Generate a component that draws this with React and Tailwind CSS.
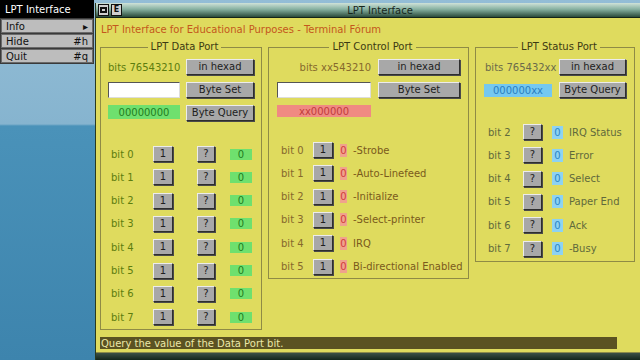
// Ventana "LPT Interface" sobre el escritorio, con el menú de ventana abierto a la izquierda.
const dataBits = [0, 1, 2, 3, 4, 5, 6, 7];
const ctrlBits = [
  ['0', '-Strobe'],
  ['1', '-Auto-Linefeed'],
  ['2', '-Initialize'],
  ['3', '-Select-printer'],
  ['4', 'IRQ'],
  ['5', 'Bi-directional Enabled'],
];
const statBits = [
  ['2', 'IRQ Status'],
  ['3', 'Error'],
  ['4', 'Select'],
  ['5', 'Paper End'],
  ['6', 'Ack'],
  ['7', '-Busy'],
];

function Btn({ children, className = '' }) {
  return (
    <button
      className={`flex shrink-0 items-center justify-center border border-t-[#ececec] border-l-[#ececec] border-b-[#2e2e2e] border-r-[#2e2e2e] bg-[#a8a8a8] leading-none text-[#1e1e1e] shadow-[1px_1px_0_#4a4a4a] ${className}`}
    >
      {children}
    </button>
  );
}

function Grupo({ titulo, className = '', children }) {
  return (
    <fieldset className={`shrink-0 border border-[#8f8b45] ${className}`}>
      <legend className="mx-auto px-[3px] leading-[12px] text-[#3c3a12]">{titulo}</legend>
      {children}
    </fieldset>
  );
}

function Menu() {
  const items = [
    ['Info', '▸'],
    ['Hide', '#h'],
    ['Quit', '#q'],
  ];
  return (
    <div className="w-[94px] bg-[#3a3a3a] pb-[1px]">
      <div className="flex h-[18px] items-center bg-black px-[5px] text-white">LPT Interface</div>
      {items.map(([t, k]) => (
        <div
          key={t}
          className="mx-[1px] mt-[1px] flex h-[14px] items-center justify-between border border-[#6a6a6a] bg-[#bdbdbd] px-[4px] text-[#111]"
        >
          <span>{t}</span>
          <span>{k}</span>
        </div>
      ))}
    </div>
  );
}

export default function App() {
  return (
    <div className="flex h-[360px] w-[640px] overflow-hidden bg-[linear-gradient(180deg,#93bdd6_0px,#86b4cf_124px,#4a92b9_126px,#3d84ad_360px)] font-['DejaVu_Sans',sans-serif] text-[10px]">
      {/* escritorio + menú */}
      <div className="w-[95px] shrink-0">
        <Menu />
      </div>

      {/* ventana */}
      <div className="mt-[3px] flex h-[357px] flex-1 flex-col border-l border-[#2a3a20] bg-[#dfdb5e]">
        <div className="flex h-[15px] shrink-0 items-center border-b border-[#142418] bg-[linear-gradient(180deg,#cfe2d8,#86b0a0_45%,#2a4a3a)] px-[2px]">
          <div className="flex gap-[2px]">
            <div className="flex h-[12px] w-[11px] items-center justify-center border border-[#111] bg-[#cfcfcf]">
              <div className="h-[6px] w-[7px] border-2 border-[#111] bg-[#cfcfcf]" />
            </div>
            <div className="flex h-[12px] w-[11px] items-center justify-center border border-[#111] bg-[#cfcfcf] text-[8px] font-bold leading-none text-[#111]">
              E
            </div>
          </div>
          <div className="flex-1 text-center text-[#17261c]">LPT Interface</div>
        </div>

        <div className="flex flex-1 flex-col pl-[4px]">
          <div className="mt-[4px] flex h-[14px] items-center pl-[1px] text-[#c4581c]">
            LPT Interface for Educational Purposes - Terminal Fórum
          </div>

          <div className="mt-[5px] flex items-start gap-[6px]">
            {/* Data Port */}
            <Grupo titulo="LPT Data Port" className="w-[162px] pb-[4px] pl-[7px] pt-[6px]">
              <div className="flex h-[16px] items-center gap-[6px]">
                <span className="w-[72px] whitespace-nowrap text-[#5d7d0e]">bits 76543210</span>
                <Btn className="h-[16px] w-[68px]">in hexad</Btn>
              </div>
              <div className="mt-[7px] flex h-[16px] items-center gap-[6px]">
                <div className="h-[16px] w-[72px] border border-t-[#555] border-l-[#555] border-b-[#ddd] border-r-[#ddd] bg-white" />
                <Btn className="h-[16px] w-[68px]">Byte Set</Btn>
              </div>
              <div className="mt-[7px] flex h-[16px] items-start gap-[6px]">
                <div className="flex h-[14px] w-[72px] items-center justify-center bg-[#6fe06e] text-[#1f7d1f]">00000000</div>
                <Btn className="h-[16px] w-[68px]">Byte Query</Btn>
              </div>
              <div className="mt-[25px] flex flex-col gap-[7.33px]">
                {dataBits.map((b) => (
                  <div key={b} className="flex h-[16px] items-center">
                    <span className="w-[45px] pl-[3px] text-[#5d7d0e]">bit {b}</span>
                    <Btn className="h-[16px] w-[20px]">1</Btn>
                    <Btn className="ml-[24px] h-[16px] w-[18px]">?</Btn>
                    <div className="ml-[15px] flex h-[11px] w-[22px] items-center justify-center bg-[#6fe06e] text-[#1f7d1f]">0</div>
                  </div>
                ))}
              </div>
            </Grupo>

            {/* Control Port */}
            <Grupo titulo="LPT Control Port" className="w-[201px] pb-[3px] pl-[8px] pt-[6px]">
              <div className="flex h-[16px] items-center gap-[7px]">
                <span className="w-[94px] whitespace-nowrap text-right text-[#86692c]">bits xx543210</span>
                <Btn className="h-[16px] w-[82px]">in hexad</Btn>
              </div>
              <div className="mt-[7px] flex h-[16px] items-center gap-[7px]">
                <div className="h-[16px] w-[94px] border border-t-[#555] border-l-[#555] border-b-[#ddd] border-r-[#ddd] bg-white" />
                <Btn className="h-[16px] w-[82px]">Byte Set</Btn>
              </div>
              <div className="mt-[7px] flex h-[12px] w-[94px] items-center justify-center bg-[#f08a82] text-[#c03c3c]">
                xx000000
              </div>
              <div className="mt-[25px] flex flex-col gap-[7.33px]">
                {ctrlBits.map(([b, t]) => (
                  <div key={b} className="flex h-[16px] items-center">
                    <span className="w-[36px] pl-[4px] text-[#86692c]">bit {b}</span>
                    <Btn className="h-[16px] w-[20px]">1</Btn>
                    <div className="ml-[7px] flex h-[13px] w-[7px] items-center justify-center bg-[#f0a28c] text-[#d23c3c]">0</div>
                    <span className="ml-[6px] whitespace-nowrap text-[#7a5a1c]">{t}</span>
                  </div>
                ))}
              </div>
            </Grupo>

            {/* Status Port */}
            <Grupo titulo="LPT Status Port" className="w-[160px] pb-[4px] pl-[8px] pt-[6px]">
              <div className="flex h-[16px] items-center">
                <span className="w-[75px] whitespace-nowrap pl-[1px] text-[#6b6b4a]">bits 765432xx</span>
                <Btn className="h-[16px] w-[67px]">in hexad</Btn>
              </div>
              <div className="mt-[7px] flex h-[16px] items-center">
                <div className="flex h-[13px] w-[68px] items-center justify-center bg-[#74c8f0] text-[#2a7fc0]">000000xx</div>
                <Btn className="ml-[7px] h-[16px] w-[67px]">Byte Query</Btn>
              </div>
              <div className="mt-[26px] flex flex-col gap-[7.33px]">
                {statBits.map(([b, t]) => (
                  <div key={b} className="flex h-[16px] items-center">
                    <span className="w-[39px] pl-[4px] text-[#5f6a3c]">bit {b}</span>
                    <Btn className="h-[16px] w-[19px]">?</Btn>
                    <div className="ml-[10px] flex h-[13px] w-[11px] items-center justify-center bg-[#8ed2f2] text-[#2a86c8]">0</div>
                    <span className="ml-[6px] whitespace-nowrap text-[#5f6a3c]">{t}</span>
                  </div>
                ))}
              </div>
            </Grupo>
          </div>

          <div className="mt-auto mb-[3px] flex h-[12px] w-[517px] items-center bg-[#5b5222] pl-[1px] text-[#ece7a8]">
            Query the value of the Data Port bit.
          </div>
        </div>

        <div className="h-[8px] shrink-0 border-t border-[#8c8a4a] bg-[linear-gradient(180deg,#3c5046,#14261c)]" />
      </div>
    </div>
  );
}
